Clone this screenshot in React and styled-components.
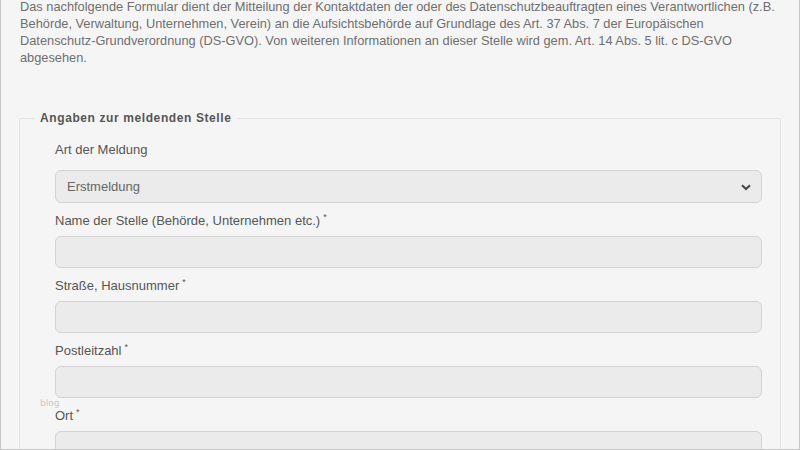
import React from "react";
import styled, { createGlobalStyle } from "styled-components";

const GlobalStyle = createGlobalStyle`
  html, body {
    margin: 0;
    padding: 0;
    background: #f5f5f5;
  }
  * {
    box-sizing: border-box;
  }
`;

const fields = [
  { id: "name", label: "Name der Stelle (Behörde, Unternehmen etc.)", required: true },
  { id: "street", label: "Straße, Hausnummer", required: true },
  { id: "zip", label: "Postleitzahl", required: true },
  { id: "city", label: "Ort", required: true },
];

function App() {
  return (
    <>
      <GlobalStyle />
      <Frame>
        <Intro>
          Das nachfolgende Formular dient der Mitteilung der Kontaktdaten der oder des
          Datenschutzbeauftragten eines Verantwortlichen (z.B.
          <br />
          Behörde, Verwaltung, Unternehmen, Verein) an die Aufsichtsbehörde auf Grundlage
          des Art. 37 Abs. 7 der Europäischen
          <br />
          Datenschutz-Grundverordnung (DS-GVO). Von weiteren Informationen an dieser Stelle
          wird gem. Art. 14 Abs. 5 lit. c DS-GVO
          <br />
          abgesehen.
        </Intro>

        <Section>
          <Legend>Angaben zur meldenden Stelle</Legend>

          <Group>
            <Label htmlFor="art" $gap={11}>Art der Meldung</Label>
            <SelectWrap>
              <Select id="art" defaultValue="erst">
                <option value="erst">Erstmeldung</option>
                <option value="aend">Änderungsmeldung</option>
              </Select>
              <Chevron viewBox="0 0 10 7" aria-hidden="true">
                <path d="M1 1.2 L5 5 L9 1.2" fill="none" stroke="#4a4a4a" strokeWidth="2.2" />
              </Chevron>
            </SelectWrap>
          </Group>

          {fields.map((f) => (
            <Group key={f.id}>
              <Label htmlFor={f.id} $gap={6}>
                {f.label}
                {f.required && <Star>*</Star>}
              </Label>
              <Input id={f.id} type="text" />
            </Group>
          ))}
        </Section>

        <Watermark>blog</Watermark>
      </Frame>
    </>
  );
}

export default App;

const Frame = styled.div`
  position: relative;
  width: 800px;
  height: 450px;
  overflow: hidden;
  background: #f5f5f5;
  border-left: 1px solid #c6c6c6;
  border-right: 1px solid #c6c6c6;
  border-bottom: 1px solid #c6c6c6;
  padding: 0 18px;
  font-family: "Liberation Sans", Arial, sans-serif;
`;

const Intro = styled.p`
  margin: -2px 0 0 1px;
  font-size: 12.8px;
  line-height: 17px;
  color: #6f6f6f;
  white-space: nowrap;
`;

const Section = styled.fieldset`
  margin: 45px 0 0 0;
  width: 762px;
  padding: 16px 18px 0 35px;
  border: 1px solid #e2e2e2;
  border-radius: 2px;
`;

const Legend = styled.legend`
  margin-left: -20px;
  padding: 0 5px;
  font-size: 12px;
  line-height: 14px;
  font-weight: bold;
  letter-spacing: 0.6px;
  color: #555555;
`;

const Group = styled.div`
  display: flex;
  flex-direction: column;
  margin-bottom: 9px;
`;

const Label = styled.label`
  font-size: 13px;
  line-height: 18px;
  color: #555555;
  margin-bottom: ${(p) => p.$gap}px;
`;

const Star = styled.sup`
  font-size: 9px;
  line-height: 0;
  margin-left: 3px;
  vertical-align: 5px;
`;

const SelectWrap = styled.div`
  position: relative;
`;

const Select = styled.select`
  appearance: none;
  width: 100%;
  height: 33px;
  padding: 0 30px 0 11px;
  border: 1px solid #d3d3d3;
  border-radius: 6px;
  background: #ebebeb;
  font-family: "Liberation Sans", Arial, sans-serif;
  font-size: 13px;
  color: #666666;
  outline: none;
`;

const Chevron = styled.svg`
  position: absolute;
  right: 11px;
  top: 14px;
  width: 10px;
  height: 7px;
  pointer-events: none;
`;

const Input = styled.input`
  width: 100%;
  height: 32px;
  padding: 0 12px;
  border: 1px solid #d3d3d3;
  border-radius: 6px;
  background: #ebebeb;
  font-family: "Liberation Sans", Arial, sans-serif;
  font-size: 13px;
  color: #555555;
  outline: none;
`;

const Watermark = styled.span`
  position: absolute;
  left: 39px;
  top: 398px;
  font-family: "DejaVu Sans", sans-serif;
  font-size: 9px;
  color: #c8c8c8;
`;
